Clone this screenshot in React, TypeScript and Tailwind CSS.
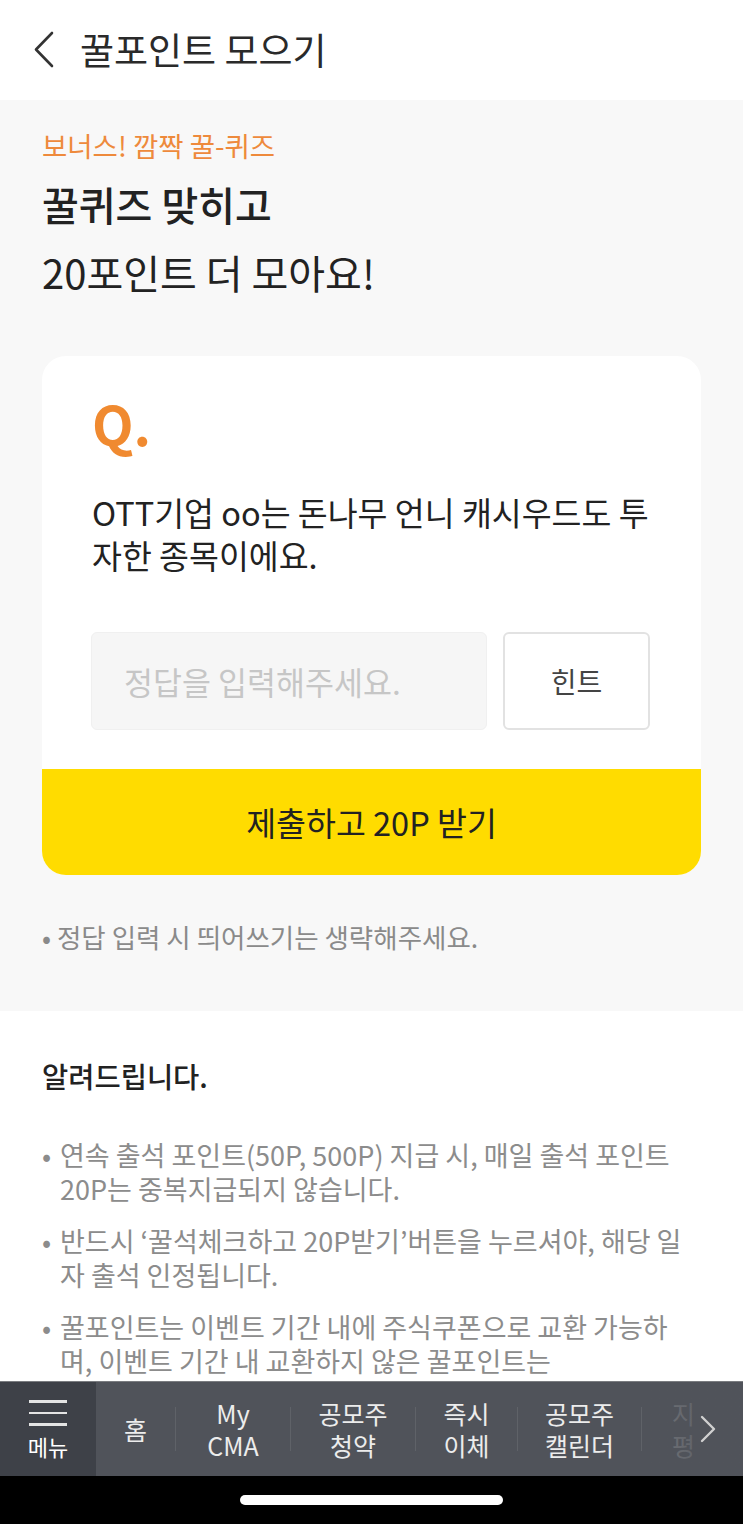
import React from "react";

const navItems: { lines: string[]; width: string }[] = [
  { lines: ["홈"], width: "w-[79px]" },
  { lines: ["My", "CMA"], width: "w-[114px]" },
  { lines: ["공모주", "청약"], width: "w-[124px]" },
  { lines: ["즉시", "이체"], width: "w-[101px]" },
  { lines: ["공모주", "캘린더"], width: "w-[123px]" },
];

const notices: string[][] = [
  ["연속 출석 포인트(50P, 500P) 지급 시, 매일 출석 포인트", "20P는 중복지급되지 않습니다."],
  ["반드시 ‘꿀석체크하고 20P받기’버튼을 누르셔야, 해당 일", "자 출석 인정됩니다."],
  ["꿀포인트는 이벤트 기간 내에 주식쿠폰으로 교환 가능하", "며, 이벤트 기간 내 교환하지 않은 꿀포인트는"],
];

export default function App() {
  return (
    <div className="flex flex-col h-screen overflow-hidden bg-white font-['Noto_Sans_CJK_KR',sans-serif] text-[#222]">
      {/* ── Header ─────────────────────────────────────────────── */}
      <header className="flex items-center h-[100px] shrink-0 bg-white">
        <div className="w-[80px] flex justify-start pl-[33px]">
          <svg width="24" height="38" viewBox="0 0 24 38" fill="none">
            <path d="M19 2 L3 18.5 L19 35" stroke="#333" strokeWidth="2.6" strokeLinecap="round" strokeLinejoin="round" />
          </svg>
        </div>
        <h1 className="text-[37px] leading-none text-[#2a2a2a] -mt-[2px]">꿀포인트 모으기</h1>
      </header>

      <main className="flex-1 overflow-hidden">
        {/* ── Quiz ───────────────────────────────────────────── */}
        <section className="bg-[#f8f8f8] px-[42px] pt-[27px] pb-[56px]">
          <p className="text-[27.5px] leading-[36px] text-[#ee8a3c]">보너스! 깜짝 꿀-퀴즈</p>
          <h2 className="mt-[7px] text-[40px] leading-[68px]">
            <span className="font-medium">꿀퀴즈 맞히고</span>
            <br />
            <span className="font-normal">20포인트 더 모아요!</span>
          </h2>

          <div className="mt-[50px] bg-white rounded-[24px] overflow-hidden">
            <div className="px-[50px] pt-[40px] pb-[39px]">
              <p className="text-[54px] leading-[54px] font-bold text-[#f08a30]">Q.</p>
              <p className="mt-[40px] text-[32.5px] leading-[43px] text-[#222]">
                OTT기업 oo는 돈나무 언니 캐시우드도 투
                <br />
                자한 종목이에요.
              </p>
              <div className="mt-[56px] flex gap-[16px]">
                <input
                  placeholder="정답을 입력해주세요."
                  className="w-[396px] h-[98px] -ml-[1px] rounded-[6px] bg-[#f6f6f6] border border-[#f0f0f0] px-[32px] text-[31.5px] text-[#333] placeholder-[#c6c6c6] outline-none"
                />
                <button className="w-[147px] h-[98px] rounded-[6px] border-2 border-[#e2e2e2] bg-white text-[28px] text-[#444]">
                  힌트
                </button>
              </div>
            </div>
            <button className="w-full h-[106px] bg-[#ffdc00] text-[32.5px] text-[#222] font-normal">
              제출하고 20P 받기
            </button>
          </div>

          <p className="mt-[44px] text-[26.5px] leading-[36px] text-[#8a8a8a]">• 정답 입력 시 띄어쓰기는 생략해주세요.</p>
        </section>

        {/* ── Notice ─────────────────────────────────────────── */}
        <section className="bg-white px-[42px] pt-[46px]">
          <h3 className="text-[28.5px] leading-[38px] font-medium text-[#222]">알려드립니다.</h3>
          <ul className="mt-[43px] flex flex-col gap-[18px]">
            {notices.map((lines, i) => (
              <li key={i} className="flex text-[27px] leading-[34px] text-[#8c8c8c] whitespace-nowrap">
                <span className="w-[18px] shrink-0">•</span>
                <span>
                  {lines[0]}
                  <br />
                  {lines[1]}
                </span>
              </li>
            ))}
          </ul>
        </section>
      </main>

      {/* ── Bottom nav ─────────────────────────────────────────── */}
      <nav className="relative flex h-[95px] shrink-0 bg-[#50535a] border-t border-[#7a7c80] overflow-hidden">
        <div className="w-[96px] shrink-0 bg-[#3e4148] flex flex-col items-center pt-[18px]">
          <div className="flex flex-col gap-[9px]">
            <span className="block w-[38px] h-[2.5px] bg-[#e4e4e4]" />
            <span className="block w-[38px] h-[2.5px] bg-[#e4e4e4]" />
            <span className="block w-[38px] h-[2.5px] bg-[#e4e4e4]" />
          </div>
          <span className="mt-[7px] text-[22px] leading-[26px] text-white">메뉴</span>
        </div>
        {navItems.map((item) => (
          <div key={item.width + item.lines[0]} className="flex items-center shrink-0">
            <div className={`${item.width} flex flex-col items-center justify-center text-[25px] leading-[32px] text-[#ececec]`}>
              {item.lines.map((l) => (
                <span key={l}>{l}</span>
              ))}
            </div>
            <span className="w-px h-[44px] bg-[#5f6268]" />
          </div>
        ))}
        <div className="flex flex-col items-center justify-center pl-[30px] text-[25px] leading-[32px] text-[#8a8c90]">
          <span>지</span>
          <span>평</span>
        </div>
        <div className="absolute right-0 top-0 bottom-0 w-[96px] bg-gradient-to-r from-[#50535a]/40 to-[#50535a] flex items-center justify-end pr-[26px]">
          <svg width="18" height="30" viewBox="0 0 18 30" fill="none">
            <path d="M3 3 L15 15 L3 27" stroke="#d0d0d0" strokeWidth="2.4" strokeLinecap="round" strokeLinejoin="round" />
          </svg>
        </div>
      </nav>
      <div className="h-[48px] shrink-0 bg-black flex items-center justify-center">
        <span className="block w-[263px] h-[10px] rounded-full bg-white" />
      </div>
    </div>
  );
}
